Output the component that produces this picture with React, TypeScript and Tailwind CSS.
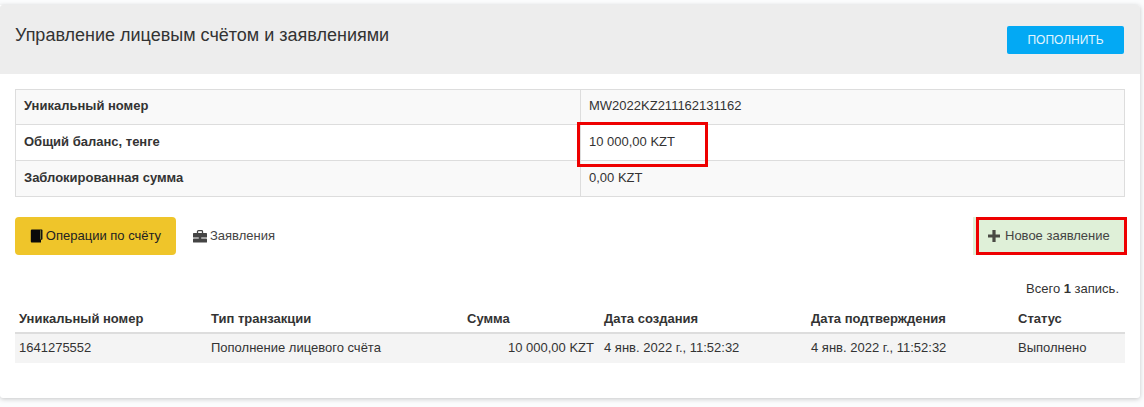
import React from "react";

const BookIcon = () => (
  <svg width="13" height="14" viewBox="0 0 13 14" className="shrink-0">
    <path d="M2 0.5H12V10.5L11 11V13.5H2C1.2 13.5 .8 13 .8 12V2C.8 1 1.2 .5 2 .5Z" fill="#0a0a0a" />
    <path d="M10.6 1.2V10.4" stroke="#7d7a2c" strokeWidth="1" />
    <path d="M12.5 .8V10.4" stroke="#5d5a30" strokeWidth=".8" />
  </svg>
);

const CaseIcon = () => (
  <svg width="14" height="13" viewBox="0 0 14 13" className="shrink-0">
    <path d="M4.5 3V1.5C4.5 1 4.9 .7 5.4 .7H8.6C9.1 .7 9.5 1 9.5 1.5V3" fill="none" stroke="#444" strokeWidth="1.3" />
    <rect x="0" y="3" width="14" height="4.6" rx="0.6" fill="#444" />
    <rect x="0" y="8.6" width="14" height="4" rx="0.6" fill="#444" />
    <rect x="5.8" y="6.6" width="2.4" height="2.6" fill="#444" />
  </svg>
);

const PlusIcon = () => (
  <svg width="12" height="12" viewBox="0 0 12 12" className="shrink-0">
    <path d="M4.4 0H7.6V4.4H12V7.6H7.6V12H4.4V7.6H0V4.4H4.4Z" fill="#4a4a44" />
  </svg>
);

const info = [
  { label: "Уникальный номер", value: "MW2022KZ211162131162", bg: "bg-[#f9f9f9]", h: "h-[35px]" },
  { label: "Общий баланс, тенге", value: "10 000,00 KZT", bg: "bg-white", mark: true, h: "h-[36px]" },
  { label: "Заблокированная сумма", value: "0,00 KZT", bg: "bg-[#f9f9f9]", h: "h-[36px]" },
];

const heads = [
  { t: "Уникальный номер", w: "w-[192px]" },
  { t: "Тип транзакции", w: "w-[256px]" },
  { t: "Сумма", w: "w-[137px]" },
  { t: "Дата создания", w: "w-[207px]" },
  { t: "Дата подтверждения", w: "w-[207px]" },
  { t: "Статус", w: "w-[111px]" },
];

export default function App() {
  return (
    <div className="h-[407px] w-[1144px] overflow-hidden bg-[#fbfcfd] pt-[5px] font-['Liberation_Sans',Arial,sans-serif] text-[13px] text-[#333]">
      <div className="h-[393px] w-[1140px] rounded-r-[3px] rounded-bl-[3px] bg-white shadow-[0_1px_5px_rgba(0,0,0,0.22)]">
        <div className="flex h-[69px] items-start justify-between rounded-t-[3px] bg-[#ededed] pl-[15px] pr-[16px]">
          <h1 className="mt-[19px] text-[18px] leading-[22px] font-normal text-[#333]">Управление лицевым счётом и заявлениями</h1>
          <button className="mt-[21px] h-[28px] w-[117px] rounded-[2px] bg-[#03a9f4] text-center text-[12px] text-[#e2f5fe]">ПОПОЛНИТЬ</button>
        </div>

        <div className="px-[15px] pt-[15px]">
          <table className="w-[1110px] table-fixed border-collapse">
            <tbody>
              {info.map((r) => (
                <tr key={r.label} className={`${r.bg} ${r.h}`}>
                  <th className="w-[565px] border border-[#dddddd] px-[8px] pb-[2px] text-left text-[13px] font-bold text-[#333]">{r.label}</th>
                  <td className="relative border border-[#dddddd] px-[8px] pb-[2px] text-[13px] text-[#333]">
                    {r.value}
                    {r.mark && <span className="absolute top-[-3px] left-[-4px] h-[45px] w-[131px] border-[3px] border-[#ee0000]" />}
                  </td>
                </tr>
              ))}
            </tbody>
          </table>

          <div className="mt-[20px] flex h-[38px] items-stretch justify-between">
            <div className="flex items-stretch">
              <a className="flex w-[161px] items-center justify-center gap-[3px] rounded-[4px] bg-[#efc52a] text-[#222]">
                <BookIcon />
                <span>Операции по счёту</span>
              </a>
              <a className="ml-[17px] flex items-center gap-[3px] text-[#444]">
                <CaseIcon />
                <span>Заявления</span>
              </a>
            </div>
            <div className="relative mr-[-2px] flex w-[154px] items-center gap-[5px] bg-[#dff0d8] pl-[15px] text-[#444]">
              <PlusIcon />
              <span>Новое заявление</span>
              <span className="absolute inset-y-0 right-0 left-[3px] border-[3px] border-[#ee0000]" />
            </div>
          </div>

          <div className="mt-[26px] pr-[6px] text-right text-[13px] leading-[16px] text-[#333]">
            Всего <b>1</b> запись.
          </div>

          <table className="mt-[11px] w-[1110px] table-fixed border-collapse">
            <thead>
              <tr className="h-[25px] border-b-2 border-[#dddddd]">
                {heads.map((h) => (
                  <th key={h.t} className={`${h.w} px-[4px] pb-[3px] text-left text-[13px] font-bold text-[#333]`}>{h.t}</th>
                ))}
              </tr>
            </thead>
            <tbody>
              <tr className="h-[30px] bg-[#f4f4f4] text-[#333]">
                <td className="px-[4px] pb-[2px]">1641275552</td>
                <td className="px-[4px] pb-[2px]">Пополнение лицевого счёта</td>
                <td className="pl-[4px] pr-[6px] pb-[2px] text-right">10 000,00 KZT</td>
                <td className="px-[4px] pb-[2px]">4 янв. 2022 г., 11:52:32</td>
                <td className="px-[4px] pb-[2px]">4 янв. 2022 г., 11:52:32</td>
                <td className="px-[4px] pb-[2px]">Выполнено</td>
              </tr>
            </tbody>
          </table>
        </div>
      </div>
    </div>
  );
}
